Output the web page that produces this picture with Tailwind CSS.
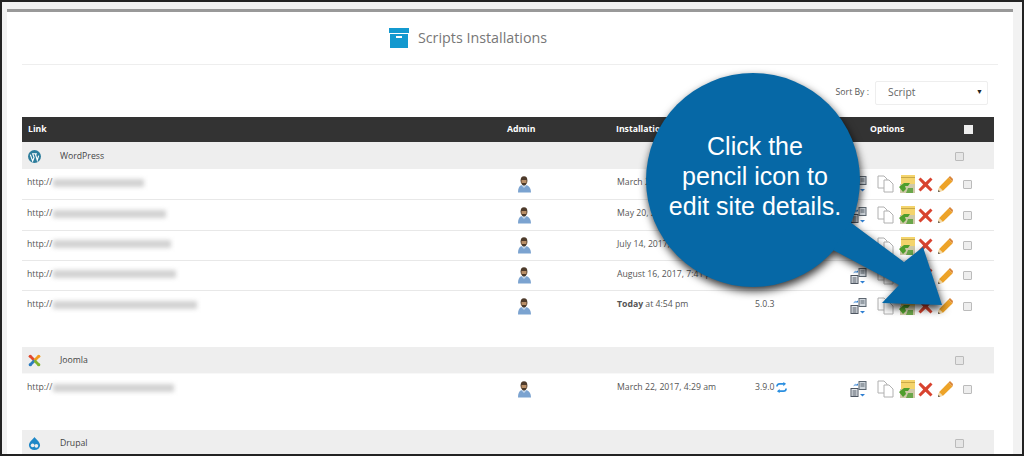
<!DOCTYPE html>
<html lang="en">
<head>
    <meta charset="UTF-8">
    <title>Scripts Installations</title>
    <script src="https://cdn.jsdelivr.net/npm/@tailwindcss/browser@4"></script>
</head>
<body class="font-['Open_Sans',sans-serif]">
    <!-- icon sprites -->
    <svg class="hidden">
        <symbol id="admin" viewBox="0 0 14 17">
            <path d="M1 16.500c0-4 1-6.500 3.500-7.500L7 11l2.500-2C12 10 14 12 14 16.500z" fill="#7ba3d0"/>
            <path d="M4.500 9.500L7 12l2.500-2.500L9 8H5z" fill="#c4d6e9"/>
            <ellipse cx="7" cy="4.500" rx="3.400" ry="4.300" fill="#4e3b2b"/>
            <path d="M4.500 4h5v2.500c0 1.500-1 2.500-2.500 2.500S4.500 8 4.500 6.500z" fill="#b98f68"/>
            <path d="M5 7h4v1.500L7 9.800 5 8.500z" fill="#4a3a2b"/>
        </symbol>
        <symbol id="clone" viewBox="0 0 18 17">
            <rect x="1" y="8" width="7" height="8" fill="#e4e8ec" stroke="#4d5560"/>
            <path d="M2.500 10.500h4M2.500 12.500h4M2.500 14.500h4" stroke="#4d5560"/>
            <rect x="9" y="1" width="7" height="8" fill="#cfd6dc" stroke="#5c6670"/>
            <path d="M10.500 3.500h4M10.500 5.500h4" stroke="#5c6670"/>
            <path d="M3 6l2.500-3v2H8V3z" fill="#2f7fd1"/>
            <path d="M10 13.500h5L12.500 16z" fill="#2f7fd1"/>
        </symbol>
        <symbol id="copy" viewBox="0 0 17 18">
            <path d="M1 1h6l3 3v9H1z" fill="#fff" stroke="#b0b0b0"/>
            <path d="M7 5h5l4 4v8H7z" fill="#fff" stroke="#b0b0b0"/>
        </symbol>
        <symbol id="box" viewBox="0 0 16 18">
            <rect x="2" y="0" width="14" height="9" fill="#f4d46c"/>
            <rect x="2" y="2" width="14" height="1" fill="#c9a948"/>
            <rect x="1" y="9" width="15" height="9" fill="#cfc9a8"/>
            <path d="M0 12l5-4h6l-2 3h-3l1 3-3 3z" fill="#4f9e2c"/>
            <path d="M7 18l2-5h5v5z" fill="#6aa64a"/>
        </symbol>
        <symbol id="remove" viewBox="0 0 15 15">
            <path d="M2.500.5L7.500 5.200 12.500.5 14.500 2.500 9.800 7.500 14.500 12.500 12.500 14.500 7.500 9.800 2.500 14.500.5 12.500 5.200 7.500.5 2.500z" fill="#d8432f"/>
        </symbol>
        <symbol id="pencil" viewBox="0 0 15 16">
            <path d="M0 16l1.200-5L10.500 1.500l4 4L5 14.800z" fill="#eda328"/>
            <path d="M10.500 1.500L12 0l3 3-.500 2.500z" fill="#d9863a"/>
            <path d="M0 16l1.200-5 3.800 3.800z" fill="#f3dcae"/>
            <path d="M0 16l.500-2 1.500 1.500z" fill="#444"/>
        </symbol>
    </svg>

    <div class="relative h-[456px] w-[1024px] overflow-hidden border-2 border-[#222] bg-[#f2f2f2] pt-[7px] pr-[9px] pl-[5px] text-[8.700px] text-[#555]">
        <div class="h-full border-t-[3px] border-[#999] bg-white">
            <!-- Title -->
            <div class="mx-[15px] flex h-[53px] items-center justify-center gap-[9px] border-b border-[#eee] pr-[84px]">
                <svg class="h-5 w-5" viewBox="0 0 20 20">
                    <rect x="0" y="0" width="20" height="5" fill="#1399cf"/>
                    <path d="M1 6h18v14H1z" fill="#1399cf"/>
                    <rect x="7" y="8" width="6" height="2" fill="#fff"/>
                </svg>
                <span class="text-[14.300px] text-[#777]">Scripts Installations</span>
            </div>

            <!-- Sort -->
            <div class="flex h-[52px] items-center justify-end pt-[3px] pr-[25px]">
                <span class="mr-[6px] text-[#555]">Sort By :</span>
                <div class="flex h-6 w-[113px] items-center justify-between rounded-[2px] border border-[#eee] pr-[4px] pl-3 text-[10.300px] text-[#666]">
                    <span>Script</span>
                    <span class="text-[7px] text-[#222]">▼</span>
                </div>
            </div>

            <!-- Table -->
            <div class="ml-[15px] w-[972px]">
                <div class="grid h-[25px] grid-cols-[485px_109px_139px_115px_94px_1fr] items-center bg-[#333] font-bold text-white">
                    <span class="pl-[6px]">Link</span>
                    <span>Admin</span>
                    <span>Installation Time</span>
                    <span>Version</span>
                    <span>Options</span>
                    <span class="h-[9px] w-[9px] bg-[#eee]"></span>
                </div>

                <!-- WordPress -->
                <div class="flex h-[27px] items-center justify-between bg-[#eee] pt-[2px] pr-[30px] pl-[6px]">
                    <div class="flex items-center gap-[19px]">
                        <svg class="h-[13px] w-[13px]" viewBox="0 0 14 14">
                            <circle cx="7" cy="7" r="7" fill="#2d7d9c"/>
                            <path d="M2.500 5L5 12l1.500-4L5 4h4.500L8 4.500 10 11l1.500-5" fill="none" stroke="#fff" stroke-width="1.200"/>
                        </svg>
                        <span class="text-[#444]">WordPress</span>
                    </div>
                    <span class="h-[9px] w-[9px] rounded-[1px] border border-[#bbb] bg-[#e6e6e6]"></span>
                </div>

                <!-- row 1 -->
                <div class="grid h-[31px] grid-cols-[485px_109px_139px_95px_1fr] items-center border-b border-[#e8e8e8]">
                    <div class="flex items-center pb-[2px] pl-[5px]"><span>http://</span><span class="h-[8px] w-[91px] bg-[#d2d2d2] blur-[2px]"></span></div>
                    <svg class="ml-[10px] h-[17px] w-[14px]"><use href="#admin"/></svg>
                    <span class="pb-[2px] pl-px">March 22, 2017, 4:29 am</span>
                    <span class="pb-[2px]">5.0.3</span>
                    <div class="flex items-center gap-[6px]">
                        <svg class="mr-[3px] h-[18px] w-[18px]"><use href="#clone"/></svg>
                        <svg class="h-[18px] w-[17px]"><use href="#copy"/></svg>
                        <svg class="ml-[-1px] h-[18px] w-[16px]"><use href="#box"/></svg>
                        <svg class="ml-[-3px] h-[15px] w-[15px]"><use href="#remove"/></svg>
                        <svg class="ml-[-1px] h-[16px] w-[15px]"><use href="#pencil"/></svg>
                        <span class="ml-[4px] h-[9px] w-[9px] rounded-[1px] border border-[#bbb] bg-[#eee]"></span>
                    </div>
                </div>
                <!-- row 2 -->
                <div class="grid h-[31px] grid-cols-[485px_109px_139px_95px_1fr] items-center border-b border-[#e8e8e8]">
                    <div class="flex items-center pb-[2px] pl-[5px]"><span>http://</span><span class="h-[8px] w-[113px] bg-[#d2d2d2] blur-[2px]"></span></div>
                    <svg class="ml-[10px] h-[17px] w-[14px]"><use href="#admin"/></svg>
                    <span class="pb-[2px] pl-px">May 20, 2017, 6:12 am</span>
                    <span class="pb-[2px]">5.0.3</span>
                    <div class="flex items-center gap-[6px]">
                        <svg class="mr-[3px] h-[18px] w-[18px]"><use href="#clone"/></svg>
                        <svg class="h-[18px] w-[17px]"><use href="#copy"/></svg>
                        <svg class="ml-[-1px] h-[18px] w-[16px]"><use href="#box"/></svg>
                        <svg class="ml-[-3px] h-[15px] w-[15px]"><use href="#remove"/></svg>
                        <svg class="ml-[-1px] h-[16px] w-[15px]"><use href="#pencil"/></svg>
                        <span class="ml-[4px] h-[9px] w-[9px] rounded-[1px] border border-[#bbb] bg-[#eee]"></span>
                    </div>
                </div>
                <!-- row 3 -->
                <div class="grid h-[30px] grid-cols-[485px_109px_139px_95px_1fr] items-center border-b border-[#e8e8e8]">
                    <div class="flex items-center pb-[2px] pl-[5px]"><span>http://</span><span class="h-[8px] w-[118px] bg-[#d2d2d2] blur-[2px]"></span></div>
                    <svg class="ml-[10px] h-[17px] w-[14px]"><use href="#admin"/></svg>
                    <span class="pb-[2px] pl-px">July 14, 2017, 3:08 pm</span>
                    <span class="pb-[2px]">5.0.3</span>
                    <div class="flex items-center gap-[6px]">
                        <svg class="mr-[3px] h-[18px] w-[18px]"><use href="#clone"/></svg>
                        <svg class="h-[18px] w-[17px]"><use href="#copy"/></svg>
                        <svg class="ml-[-1px] h-[18px] w-[16px]"><use href="#box"/></svg>
                        <svg class="ml-[-3px] h-[15px] w-[15px]"><use href="#remove"/></svg>
                        <svg class="ml-[-1px] h-[16px] w-[15px]"><use href="#pencil"/></svg>
                        <span class="ml-[4px] h-[9px] w-[9px] rounded-[1px] border border-[#bbb] bg-[#eee]"></span>
                    </div>
                </div>
                <!-- row 4 -->
                <div class="grid h-[30px] grid-cols-[485px_109px_139px_95px_1fr] items-center border-b border-[#e8e8e8]">
                    <div class="flex items-center pb-[2px] pl-[5px]"><span>http://</span><span class="h-[8px] w-[123px] bg-[#d2d2d2] blur-[2px]"></span></div>
                    <svg class="ml-[10px] h-[17px] w-[14px]"><use href="#admin"/></svg>
                    <span class="pb-[2px] pl-px">August 16, 2017, 7:41 pm</span>
                    <span class="pb-[2px]">5.0.3</span>
                    <div class="flex items-center gap-[6px]">
                        <svg class="mr-[3px] h-[18px] w-[18px]"><use href="#clone"/></svg>
                        <svg class="h-[18px] w-[17px]"><use href="#copy"/></svg>
                        <svg class="ml-[-1px] h-[18px] w-[16px]"><use href="#box"/></svg>
                        <svg class="ml-[-3px] h-[15px] w-[15px]"><use href="#remove"/></svg>
                        <svg class="ml-[-1px] h-[16px] w-[15px]"><use href="#pencil"/></svg>
                        <span class="ml-[4px] h-[9px] w-[9px] rounded-[1px] border border-[#bbb] bg-[#eee]"></span>
                    </div>
                </div>
                <!-- row 5 -->
                <div class="mb-[26px] grid h-[30px] grid-cols-[485px_109px_139px_95px_1fr] items-center">
                    <div class="flex items-center pb-[2px] pl-[5px]"><span>http://</span><span class="h-[8px] w-[144px] bg-[#d2d2d2] blur-[2px]"></span></div>
                    <svg class="ml-[10px] h-[17px] w-[14px]"><use href="#admin"/></svg>
                    <span class="pb-[2px] pl-px"><b>Today</b> at 4:54 pm</span>
                    <span class="pb-[2px]">5.0.3</span>
                    <div class="flex items-center gap-[6px]">
                        <svg class="mr-[3px] h-[18px] w-[18px]"><use href="#clone"/></svg>
                        <svg class="h-[18px] w-[17px]"><use href="#copy"/></svg>
                        <svg class="ml-[-1px] h-[18px] w-[16px]"><use href="#box"/></svg>
                        <svg class="ml-[-3px] h-[15px] w-[15px]"><use href="#remove"/></svg>
                        <svg class="ml-[-1px] h-[16px] w-[15px]"><use href="#pencil"/></svg>
                        <span class="ml-[4px] h-[9px] w-[9px] rounded-[1px] border border-[#bbb] bg-[#eee]"></span>
                    </div>
                </div>

                <!-- Joomla -->
                <div class="flex h-[27px] items-center justify-between border-b border-[#f8f8f8] bg-[#eee] pt-[1px] pr-[30px] pl-[6px]">
                    <div class="flex items-center gap-[19px]">
                        <svg class="h-[13px] w-[13px]" viewBox="0 0 14 14">
                            <path d="M3 3l4 4" stroke="#e2492d" stroke-width="3"/>
                            <path d="M11 3L7 7" stroke="#f19b1c" stroke-width="3"/>
                            <path d="M3 11l4-4" stroke="#2c7cc0" stroke-width="3"/>
                            <path d="M11 11L7 7" stroke="#7eb22d" stroke-width="3"/>
                            <circle cx="2.500" cy="2.500" r="1.800" fill="#e2492d"/>
                            <circle cx="11.500" cy="2.500" r="1.800" fill="#f19b1c"/>
                            <circle cx="2.500" cy="11.500" r="1.800" fill="#2c7cc0"/>
                            <circle cx="11.500" cy="11.500" r="1.800" fill="#7eb22d"/>
                        </svg>
                        <span class="text-[#444]">Joomla</span>
                    </div>
                    <span class="h-[9px] w-[9px] rounded-[1px] border border-[#bbb] bg-[#e6e6e6]"></span>
                </div>
                <div class="mb-[26px] grid h-[30px] grid-cols-[485px_109px_139px_95px_1fr] items-center">
                    <div class="flex items-center pb-[2px] pl-[5px]"><span>http://</span><span class="h-[8px] w-[121px] bg-[#d2d2d2] blur-[2px]"></span></div>
                    <svg class="ml-[10px] h-[17px] w-[14px]"><use href="#admin"/></svg>
                    <span class="pb-[2px] pl-px">March 22, 2017, 4:29 am</span>
                    <span class="flex items-center gap-[2px] pb-[2px]">3.9.0
                        <svg class="h-[11px] w-[11px]" viewBox="0 0 12 12" fill="none" stroke="#2b8fe0" stroke-width="1.800">
                            <path d="M1 5c0-2 1-3 3-3h5"/><path d="M8 0l3 2-3 2.500z" fill="#2b8fe0" stroke="none"/>
                            <path d="M11 7c0 2-1 3-3 3H3"/><path d="M4 12L1 10l3-2.500z" fill="#2b8fe0" stroke="none"/>
                        </svg>
                    </span>
                    <div class="flex items-center gap-[6px]">
                        <svg class="mr-[3px] h-[18px] w-[18px]"><use href="#clone"/></svg>
                        <svg class="h-[18px] w-[17px]"><use href="#copy"/></svg>
                        <svg class="ml-[-1px] h-[18px] w-[16px]"><use href="#box"/></svg>
                        <svg class="ml-[-3px] h-[15px] w-[15px]"><use href="#remove"/></svg>
                        <svg class="ml-[-1px] h-[16px] w-[15px]"><use href="#pencil"/></svg>
                        <span class="ml-[4px] h-[9px] w-[9px] rounded-[1px] border border-[#bbb] bg-[#eee]"></span>
                    </div>
                </div>

                <!-- Drupal -->
                <div class="flex h-[27px] items-center justify-between bg-[#eee] pr-[30px] pl-[6px]">
                    <div class="flex items-center gap-[19px]">
                        <svg class="h-[13px] w-[13px]" viewBox="0 0 14 14">
                            <path d="M7 0c1 2 6 5 6 9a6 5 0 0 1-12 0c0-4 5-7 6-9z" fill="#1e87c7"/>
                            <circle cx="5" cy="9" r="2" fill="#eee"/>
                            <circle cx="9" cy="9.500" r="2" fill="#eee"/>
                        </svg>
                        <span class="text-[#444]">Drupal</span>
                    </div>
                    <span class="h-[9px] w-[9px] rounded-[1px] border border-[#bbb] bg-[#e6e6e6]"></span>
                </div>
            </div>
        </div>

        <!-- Callout over the table -->
        <svg class="absolute top-[-2px] left-[-2px] h-[456px] w-[1024px] drop-shadow-[1px_4px_4px_rgba(0,0,0,0.8)]" viewBox="0 0 1024 456">
            <circle cx="753" cy="180" r="107" fill="#0668a6"/>
            <polygon points="850,222 904,262 923,247 942,305 882,303 899,285 833,250" fill="#0668a6"/>
        </svg>
        <div class="absolute top-[129px] left-[646px] w-[214px] text-center font-['Liberation_Sans',sans-serif] text-[25px] leading-[30px] text-white">
            Click the<br>pencil icon to<br>edit site details.
        </div>
    </div>
</body>
</html>
